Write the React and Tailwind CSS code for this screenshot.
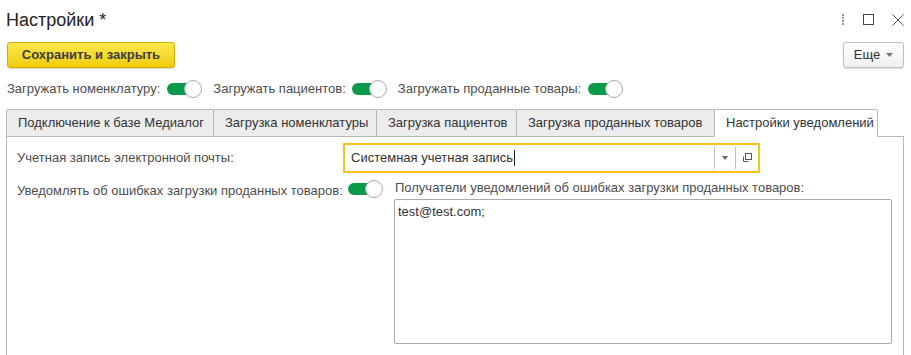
import React from "react";

function Toggle() {
  return (
    <div className="relative w-[35px] h-[18px] shrink-0">
      <div className="absolute left-0 top-[3px] w-[28px] h-[12px] rounded-full bg-[#0b9a4b]" />
      <div className="absolute right-0 top-0 w-[18px] h-[18px] rounded-full bg-white border border-[#a8a8a8]" />
    </div>
  );
}

function Tab({ w, active, children }) {
  return (
    <div
      className={
        "h-[28px] -ml-px first:ml-0 flex items-center px-[11px] border border-[#b7b7b7] rounded-t-[2px] text-[13px] text-[#333] whitespace-nowrap " +
        (active ? "bg-white border-b-white relative z-10" : "bg-[#ececec]")
      }
      style={{ width: w }}
    >
      {children}
    </div>
  );
}

export default function App() {
  return (
    <div className="w-[911px] h-[355px] bg-white overflow-hidden text-[13px] text-[#4d4d4d] font-['Liberation_Sans',Arial,sans-serif]">
      {/* header */}
      <div className="h-[38px] flex items-center justify-between pl-[6px] pr-[6px] pt-[1px]">
        <div className="text-[18px] text-[#222] leading-none">Настройки *</div>
        <div className="flex items-center gap-[18px] pr-[1px]">
          <svg width="4" height="12" viewBox="0 0 4 12">
            <rect x="1" y="0" width="2" height="2" fill="#999" />
            <rect x="1" y="3" width="2" height="2" fill="#999" />
            <rect x="1" y="6" width="2" height="2" fill="#999" />
            <rect x="1" y="9" width="2" height="2" fill="#999" />
          </svg>
          <svg width="11" height="11" viewBox="0 0 11 11">
            <rect x="0.5" y="0.5" width="10" height="10" fill="none" stroke="#444" strokeWidth="1" />
          </svg>
          <svg width="12" height="12" viewBox="0 0 12 12">
            <path d="M0.5 0.5 L11.5 11.5 M11.5 0.5 L0.5 11.5" stroke="#555" strokeWidth="1" />
          </svg>
        </div>
      </div>

      {/* command bar */}
      <div className="flex items-center justify-between pl-[7px] pr-[7px] mt-[4px]">
        <div className="w-[168px] h-[26px] flex items-center justify-center rounded-[3px] border border-[#d2ad00] bg-gradient-to-b from-[#fbe74a] to-[#f0cd00] text-[13px] font-bold text-[#3d3d3d] shadow-[0_1px_1px_rgba(0,0,0,0.15)]">
          Сохранить и закрыть
        </div>
        <div className="w-[61px] h-[26px] flex items-center justify-center gap-[6px] rounded-[3px] border border-[#bdbdbd] bg-gradient-to-b from-white to-[#f0f0f0] text-[13px] text-[#333] shadow-[0_1px_1px_rgba(0,0,0,0.12)]">
          <span>Еще</span>
          <svg width="7" height="4" viewBox="0 0 7 4">
            <path d="M0 0 H7 L3.5 4 Z" fill="#777" />
          </svg>
        </div>
      </div>

      {/* toggles row */}
      <div className="flex items-center pl-[7px] mt-[11px] h-[20px]">
        <span>Загружать номенклатуру:</span>
        <div className="ml-[7px] mr-[11px]"><Toggle /></div>
        <span>Загружать пациентов:</span>
        <div className="ml-[6px] mr-[11px]"><Toggle /></div>
        <span>Загружать проданные товары:</span>
        <div className="ml-[7px]"><Toggle /></div>
      </div>

      {/* tabs */}
      <div className="ml-[6px] mt-[10px] w-[898px]">
        <div className="flex items-end relative z-10 -mb-px">
          <Tab w={208}>Подключение к базе Медиалог</Tab>
          <Tab w={164}>Загрузка номенклатуры</Tab>
          <Tab w={141}>Загрузка пациентов</Tab>
          <Tab w={199}>Загрузка проданных товаров</Tab>
          <Tab w={164} active>Настройки уведомлений</Tab>
        </div>
        <div className="border border-[#b7b7b7] h-[240px] pl-[10px] pt-[6px]">
          {/* row 1 */}
          <div className="flex items-center h-[30px]">
            <div className="w-[326px] shrink-0">Учетная запись электронной почты:</div>
            <div className="w-[417px] h-[30px] border-2 border-[#f4c41c] flex items-center">
              <div className="flex-1 pl-[6px] text-[#333] flex items-center">
                Системная учетная запись
                <span className="inline-block w-px h-[16px] bg-[#222] ml-[1px]" />
              </div>
              <div className="w-px h-[22px] bg-[#bdbdbd]" />
              <div className="w-[20px] flex items-center justify-center">
                <svg width="6" height="4" viewBox="0 0 6 4">
                  <path d="M0 0 H6 L3 4 Z" fill="#666" />
                </svg>
              </div>
              <div className="w-px h-[22px] bg-[#bdbdbd]" />
              <div className="w-[22px] flex items-center justify-center">
                <svg width="10" height="10" viewBox="0 0 10 10">
                  <rect x="3.5" y="0.5" width="6" height="6" fill="none" stroke="#555" strokeWidth="1" />
                  <path d="M1.5 3.5 V8.5 H6.5" fill="none" stroke="#555" strokeWidth="1" />
                </svg>
              </div>
            </div>
          </div>

          {/* row 2 */}
          <div className="flex mt-[6px]">
            <div className="flex items-start h-[20px]">
              <div className="w-[331px] shrink-0 pt-[2px]">Уведомлять об ошибках загрузки проданных товаров:</div>
              <div className="pt-[1px]"><Toggle /></div>
            </div>
            <div className="ml-[11px] flex flex-col">
              <div className="pl-[1px] pt-[1px] h-[17px] leading-[15px]">Получатели уведомлений об ошибках загрузки проданных товаров:</div>
              <div className="mt-[3px] w-[498px] h-[145px] border border-[#a9a9a9] rounded-[2px] px-[3px] pt-[4px] leading-[15px] text-[#333]">
                test@test.com;
              </div>
            </div>
          </div>
        </div>
      </div>
    </div>
  );
}
